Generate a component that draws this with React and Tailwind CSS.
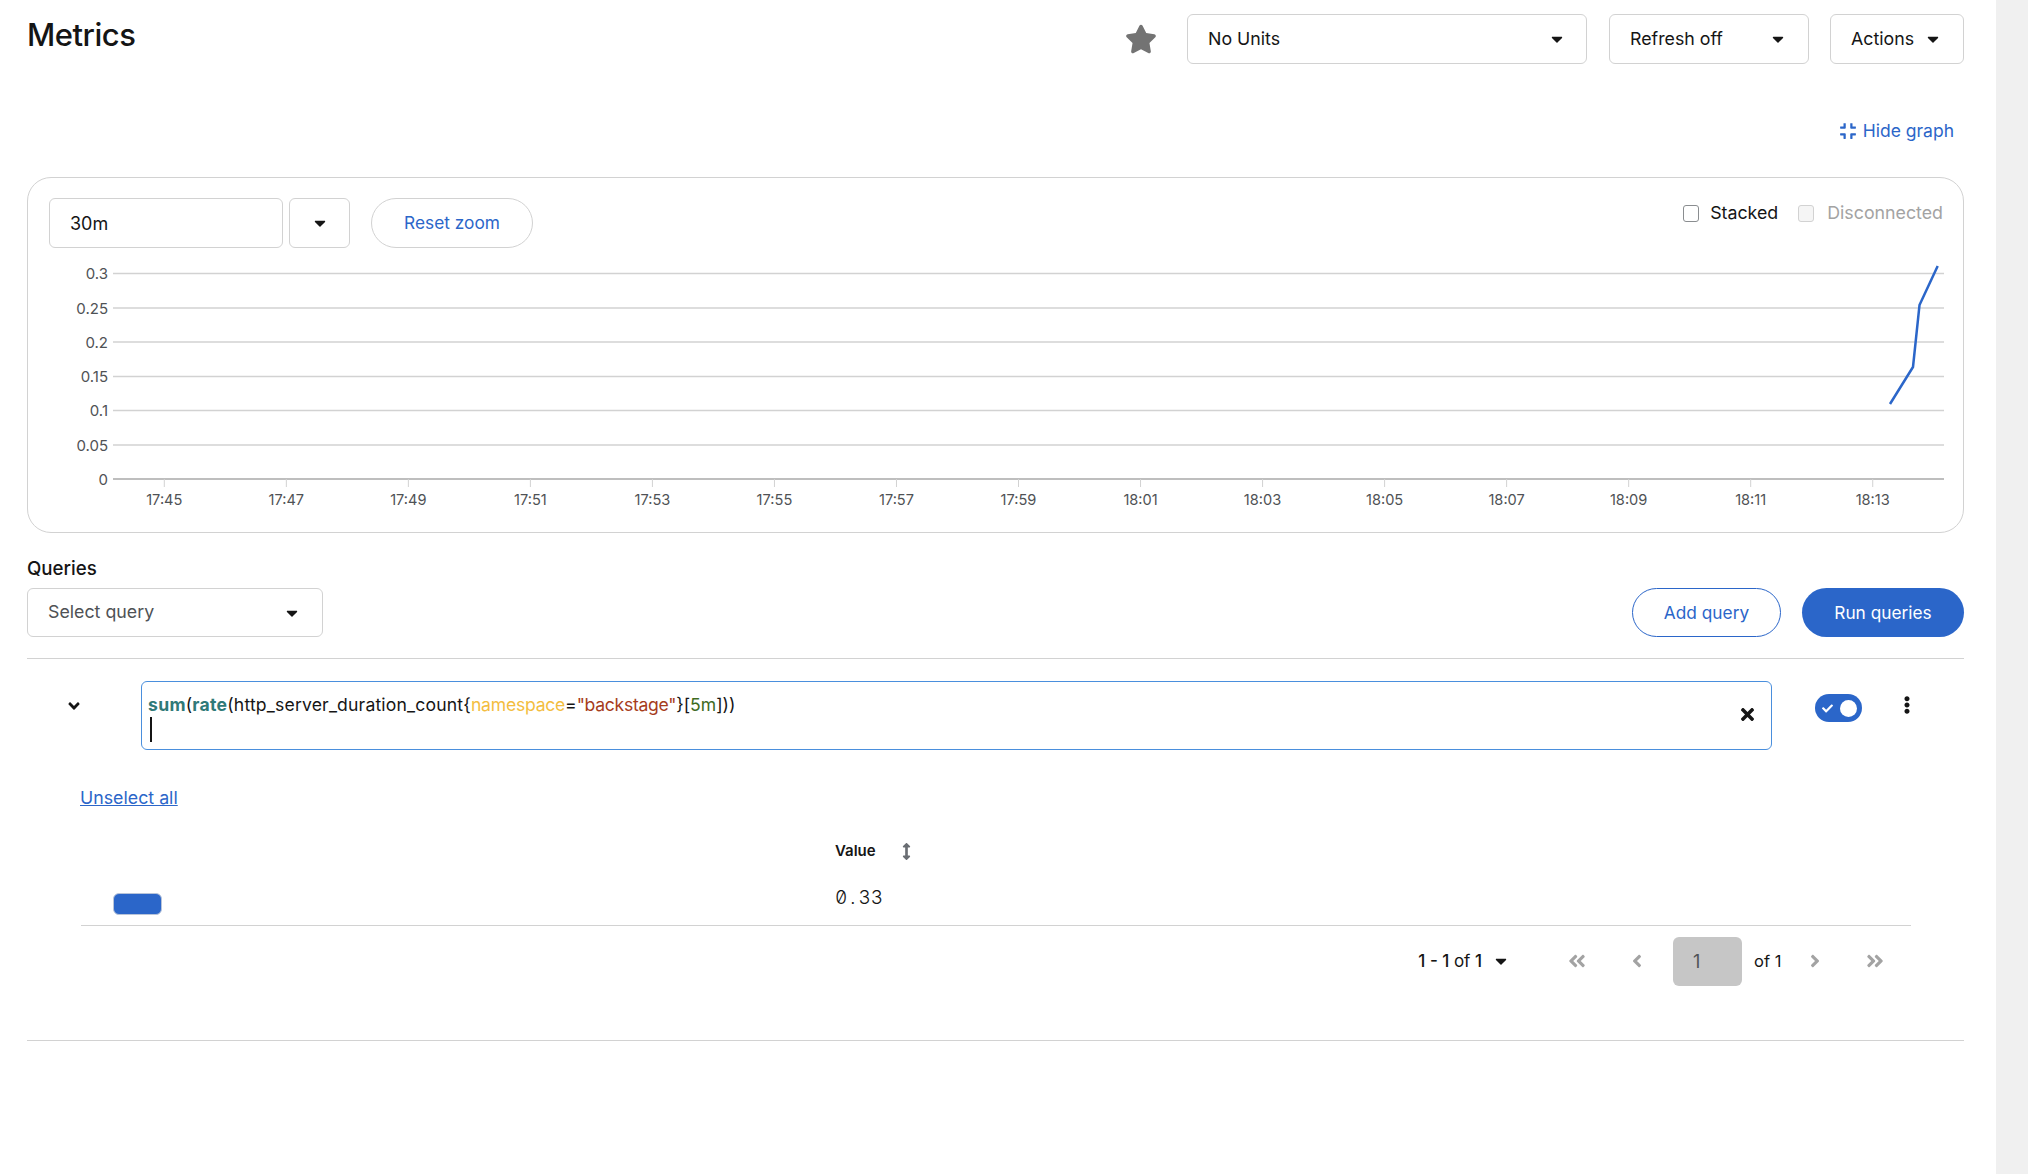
import React from "react";
import { FaCaretDown, FaStar, FaCompress, FaAngleDown, FaTimes, FaCheck, FaEllipsisV, FaArrowsAltV, FaAngleDoubleLeft, FaAngleDoubleRight, FaAngleLeft, FaAngleRight } from "react-icons/fa";

const yTicks = [["0.3", 273.5], ["0.25", 308], ["0.2", 342], ["0.15", 376.5], ["0.1", 410.5], ["0.05", 445]];
const xTicks = ["17:45", "17:47", "17:49", "17:51", "17:53", "17:55", "17:57", "17:59", "18:01", "18:03", "18:05", "18:07", "18:09", "18:11", "18:13"];

function Chart() {
  const ox = 49;
  const oy = 258;
  return (
    <svg width="1895" height="266" className="block overflow-visible font-[Inter,sans-serif]">
      {yTicks.map(([l, y]) => (
        <g key={l}>
          <line x1={113 - ox} x2={1944 - ox} y1={y - oy} y2={y - oy} stroke="#d2d2d2" strokeWidth="1.5" />
          <text x={108 - ox} y={y - oy + 5.5} textAnchor="end" fill="#4f5255" fontSize="15">{l}</text>
        </g>
      ))}
      <text x={108 - ox} y={479 - oy + 5.5} textAnchor="end" fill="#4f5255" fontSize="15">0</text>
      <line x1={113 - ox} x2={1944 - ox} y1={479 - oy} y2={479 - oy} stroke="#a9a9a9" strokeWidth="1.5" />
      {xTicks.map((l, i) => {
        const x = 164.3 + i * 122.03 - ox;
        return (
          <g key={l}>
            <line x1={x} x2={x} y1={479 - oy} y2={487 - oy} stroke="#d2d2d2" />
            <text x={x} y={505 - oy} textAnchor="middle" fill="#4f5255" fontSize="14.6">{l}</text>
          </g>
        );
      })}
      <polyline
        fill="none"
        stroke="#2b66c9"
        strokeWidth="2.5"
        points={`${1890 - ox},${404 - oy} ${1913 - ox},${367 - oy} ${1919.5 - ox},${305 - oy} ${1937.7 - ox},${266 - oy}`}
      />
    </svg>
  );
}

function SelectBox({ className, label, muted }) {
  return (
    <div className={`flex items-center justify-between rounded-[6px] border border-[#d2d2d2] bg-white pl-[20px] text-[17.8px] ${className}`}>
      <span className={muted ? "text-[#4f5255]" : "text-[#151515]"}>{label}</span>
      <FaCaretDown className="text-[#151515]" size={18} />
    </div>
  );
}

export default function App() {
  return (
    <div className="flex h-[1174px] overflow-hidden bg-white font-[Inter,sans-serif] text-[18px] text-[#151515]">
      <main className="min-w-0 flex-1 pl-[27px] pr-[32px]">
        <header className="flex items-start pt-[14px]">
          <h1 className="flex-1 pt-[1px] text-[31px] leading-[40px] font-medium tracking-[-0.5px]">Metrics</h1>
          <FaStar className="mr-[30px] mt-[9px] text-[#737373]" size={32} />
          <SelectBox className="h-[50px] w-[400px] pr-[20px]" label="No Units" />
          <SelectBox className="ml-[22px] h-[50px] w-[200px] pr-[21px]" label="Refresh off" />
          <SelectBox className="ml-[21px] h-[50px] w-[134px] pr-[21px]" label="Actions" />
        </header>

        <div className="mt-[56px] flex h-[22px] items-center justify-end pr-[10px] text-[17.5px] text-[#2b66c9]">
          <FaCompress size={18} className="mr-[6px]" />
          <span>Hide graph</span>
        </div>

        <section className="mt-[35px] h-[356px] rounded-[24px] border border-[#d2d2d2] pl-[21px] pr-[20px] pt-[20px]">
          <div className="flex items-start justify-between">
            <div className="flex">
              <div className="flex h-[50px] w-[234px] items-center rounded-[6px] border border-[#d2d2d2] pl-[20px]">30m</div>
              <div className="ml-[6px] flex h-[50px] w-[61px] items-center justify-center rounded-[6px] border border-[#d2d2d2]">
                <FaCaretDown size={18} />
              </div>
              <button className="ml-[21px] h-[50px] w-[162px] rounded-full border border-[#d2d2d2] text-[17.3px] text-[#2b66c9]">Reset zoom</button>
            </div>
            <div className="flex items-center pt-[3px] text-[17.8px] leading-[24px]">
              <span className="h-[17px] w-[16px] rounded-[3px] border-[1.5px] border-[#8a8d90]" />
              <span className="ml-[11px]">Stacked</span>
              <span className="ml-[20px] h-[17px] w-[16px] rounded-[3px] border border-[#d2d2d2] bg-[#f5f5f5]" />
              <span className="ml-[13px] text-[#a3a3a3]">Disconnected</span>
            </div>
          </div>
          <div className="mt-[10px]">
            <Chart />
          </div>
        </section>

        <div className="mt-[25px] text-[18.7px] leading-[22px] font-medium">Queries</div>
        <div className="mt-[8px] flex items-center justify-between">
          <SelectBox className="h-[49px] w-[296px] pr-[21px]" label="Select query" muted />
          <div className="flex text-[17.3px]">
            <button className="h-[49px] w-[149px] rounded-full border border-[#2b66c9] text-[#2b66c9]">Add query</button>
            <button className="ml-[21px] h-[49px] w-[162px] rounded-full bg-[#2b66c9] text-white">Run queries</button>
          </div>
        </div>
        <div className="mt-[21px] h-px bg-[#d2d2d2]" />

        <div className="mt-[22px] flex items-start">
          <div className="flex w-[114px] justify-start pl-[38px] pt-[16px]">
            <FaAngleDown size={18} />
          </div>
          <div className="flex h-[69px] w-[1631px] justify-between rounded-[6px] border border-[#4a8fdd] pl-[6px] pr-[14px]">
            <div className="text-[17.6px] leading-[25px]">
              <div className="pt-[10px]">
                <span className="font-bold tracking-[0.3px] text-[#2f7a78]">sum</span>
                <span>(</span>
                <span className="font-bold tracking-[0.3px] text-[#2f7a78]">rate</span>
                <span className="tracking-[0.17px]">(http_server_duration_count{"{"}</span>
                <span className="tracking-[-0.25px] text-[#f3bd3f]">namespace</span>
                <span>=</span>
                <span className="tracking-[-0.3px] text-[#a63c1c]">"backstage"</span>
                <span>{"}"}[</span>
                <span className="text-[#3e6b1f]">5m</span>
                <span>]))</span>
              </div>
              <div className="ml-[2px] h-[25px] w-[2px] bg-[#151515]" />
            </div>
            <FaTimes size={19} className="mt-[23px]" />
          </div>
          <div className="ml-[43px] mt-[13px] flex h-[28px] w-[47px] items-center justify-between rounded-full bg-[#2b66c9] pl-[7px] pr-[5px]">
            <FaCheck size={11} className="text-white" />
            <span className="h-[17px] w-[17px] rounded-full bg-white" />
          </div>
          <FaEllipsisV size={18} className="ml-[36px] mt-[15px]" />
        </div>

        <div className="ml-[54px] mr-[53px]">
          <a className="mt-[36px] -ml-px block text-[17.8px] leading-[24px] text-[#2b66c9] underline">Unselect all</a>
          <div className="mt-[29px] flex h-[24px] items-center pl-[754px]">
            <span className="text-[15px] font-semibold">Value</span>
            <FaArrowsAltV size={17} className="ml-[22px] text-[#6a6e73]" />
          </div>
          <div className="flex h-[63px] items-end border-b border-[#d2d2d2] pb-[10px]">
            <div className="w-[754px] pl-[32px]">
              <div className="h-[22px] w-[49px] rounded-[6px] border border-[#b8c4d9] bg-[#2b66c9]" />
            </div>
            <span className="mb-[5px] text-[19px] leading-[24px] font-light slashed-zero tabular-nums">0<span className="px-[3px]">.</span>33</span>
          </div>
          <div className="mt-[10px] flex h-[50px] items-center justify-end pr-[6px]">
            <span className="mt-[2px] text-[17px] font-medium">1 - 1 <span className="font-normal">of</span> 1</span>
            <FaCaretDown size={18} className="ml-[10px]" />
            <div className="ml-[37px] flex w-[60px] justify-center text-[#a3a3a3]"><FaAngleDoubleLeft size={20} /></div>
            <div className="flex w-[60px] justify-center text-[#a3a3a3]"><FaAngleLeft size={20} /></div>
            <div className="ml-[6px] flex h-[49px] w-[69px] items-center rounded-[6px] bg-[#c6c6c6] pl-[20px] text-[#4f5255]">1</div>
            <span className="ml-[12px] w-[31px] text-[16.5px]">of 1</span>
            <div className="flex w-[60px] justify-center text-[#a3a3a3]"><FaAngleRight size={20} /></div>
            <div className="flex w-[60px] justify-center text-[#a3a3a3]"><FaAngleDoubleRight size={20} /></div>
          </div>
        </div>

        <div className="mt-[54px] h-px bg-[#d2d2d2]" />
      </main>
      <aside className="w-[32px] shrink-0 bg-[#f0f0f0]" />
    </div>
  );
}
